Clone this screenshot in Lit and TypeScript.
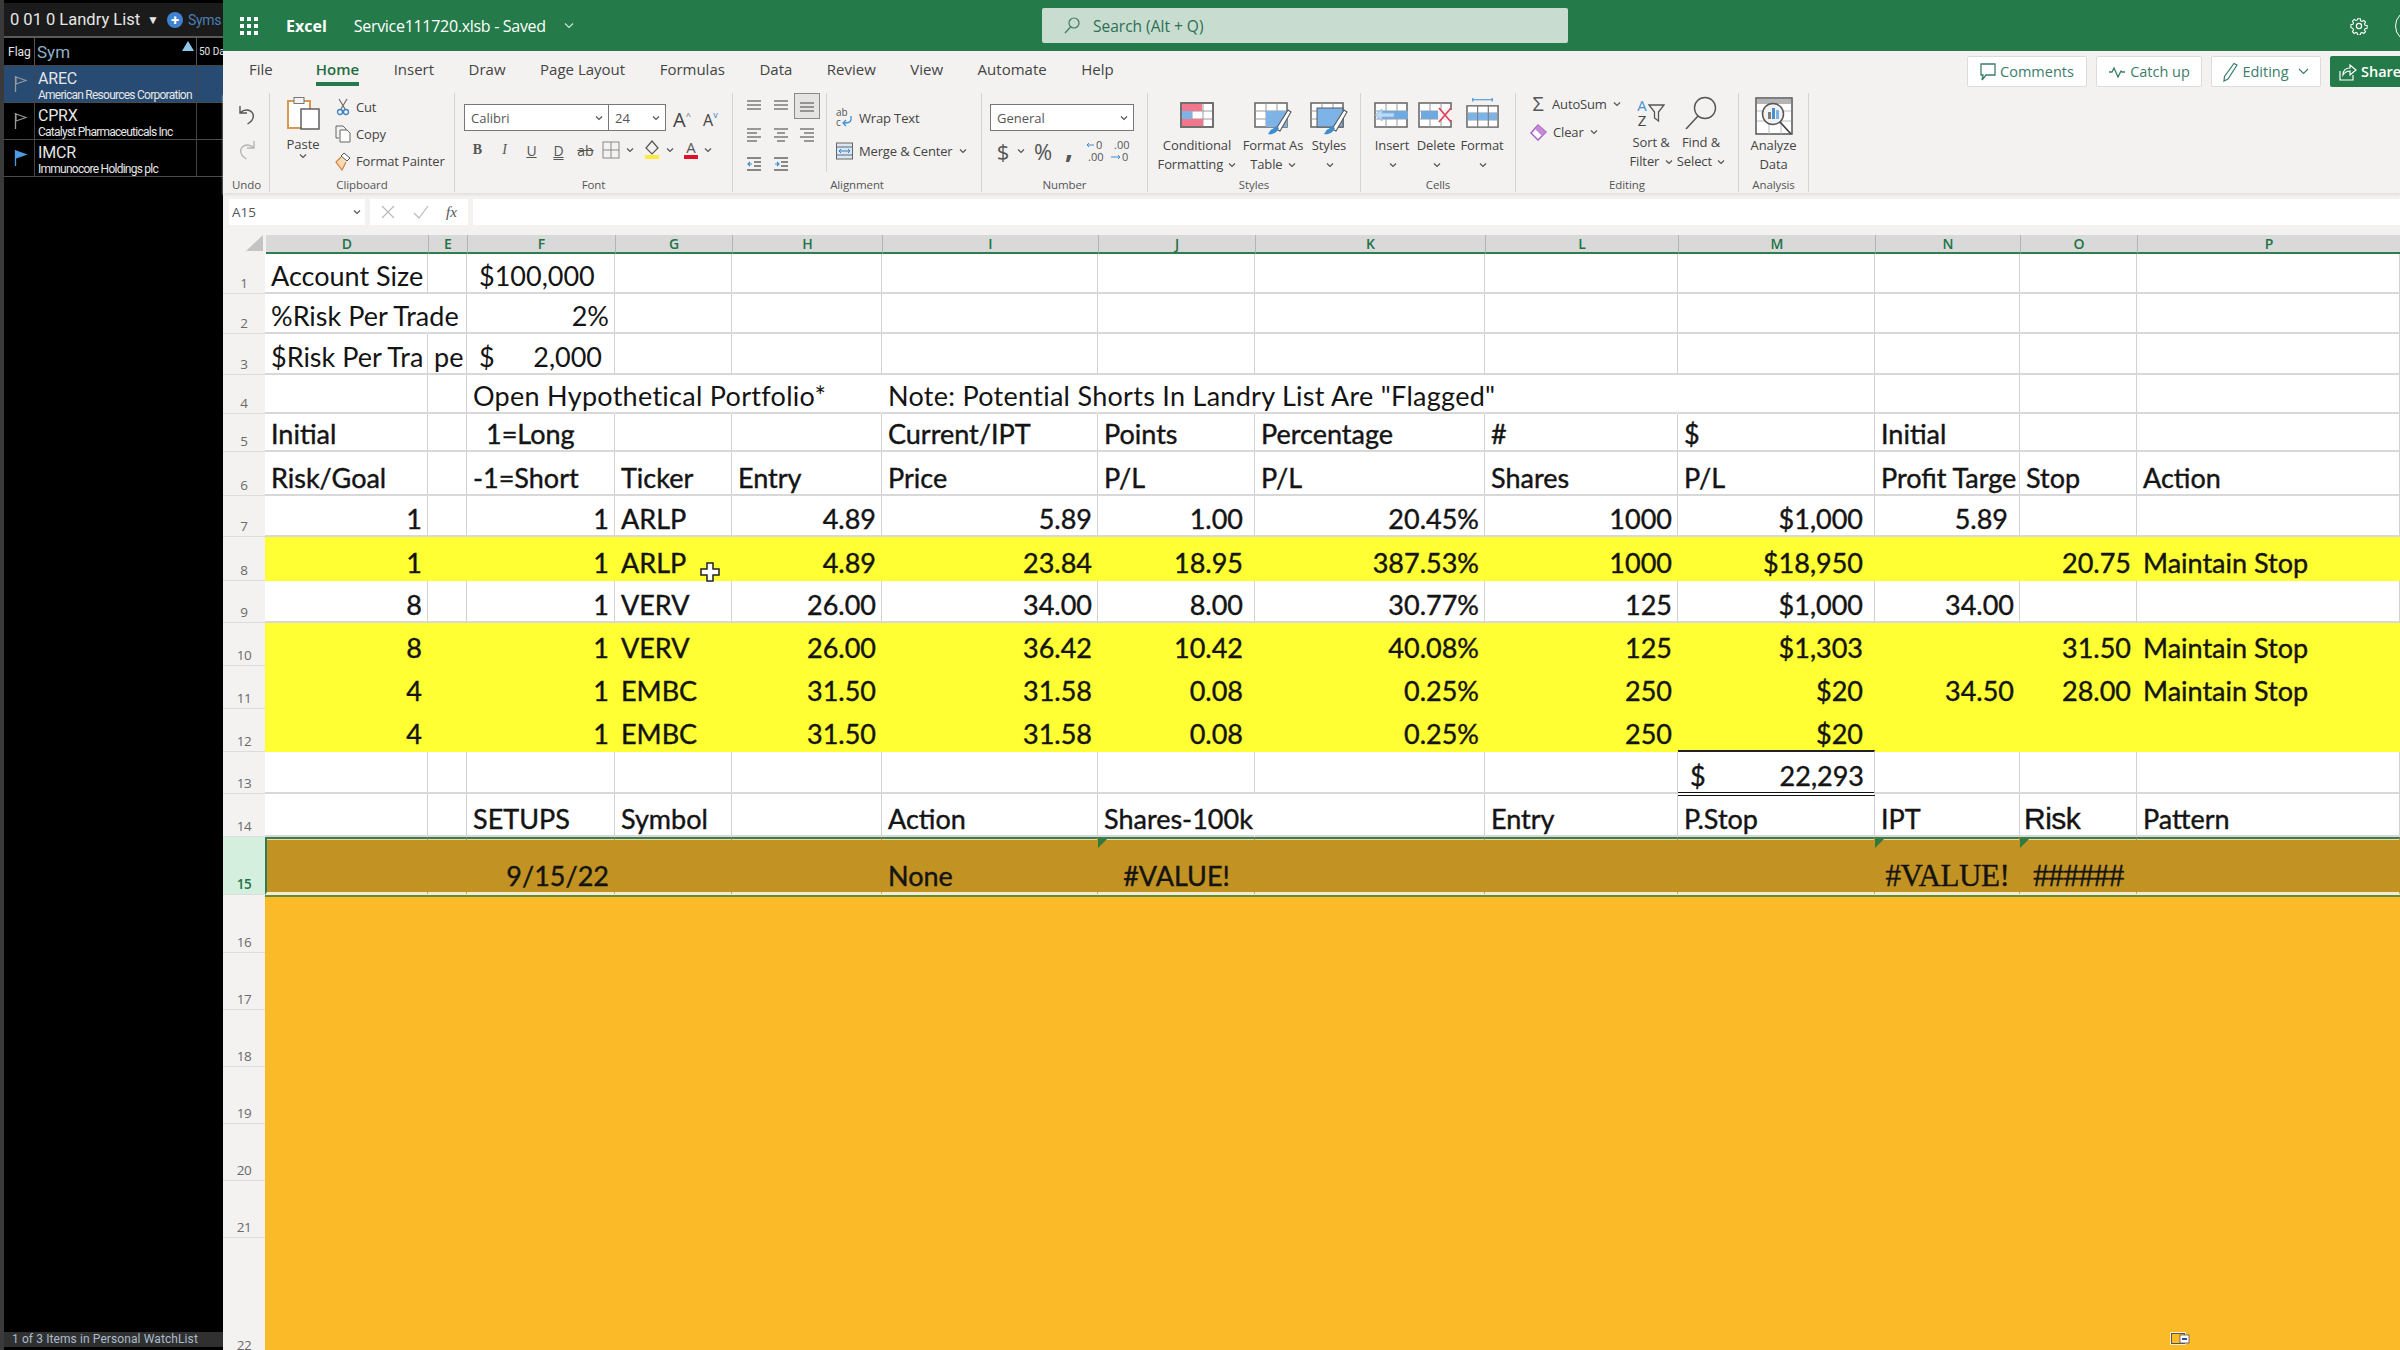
import { LitElement, html, svg, css } from 'lit';
import { customElement } from 'lit/decorators.js';

type Cell = string | { t: string; c?: string; t2?: string; mark?: boolean };
interface Row { n: number; h: number; tone?: string; strong?: boolean; open?: string; cells?: Record<string, Cell> }

const COLS = ['D', 'E', 'F', 'G', 'H', 'I', 'J', 'K', 'L', 'M', 'N', 'O', 'P'];
const r = (t: string): Cell => ({ t, c: 'r' });
// accounting formats leave a wider gap on the right
const rp = (t: string): Cell => ({ t, c: 'r pad' });

const trade = (n: number, tone: string, d: string, tick: string, entry: string, price: string, pts: string, pct: string, sh: string, pl: string, rest: Record<string, Cell> = {}): Row => ({
  n, h: 0, tone, strong: true,
  cells: { D: r(d), F: r('1'), G: tick, H: r(entry), I: r(price), J: rp(pts), K: r(pct), L: r(sh), M: rp(pl), ...rest },
});

const withH = (row: Row, h: number): Row => ({ ...row, h });

const ROWS: Row[] = [
  { n: 1, h: 40, cells: { D: 'Account Size', F: { t: '$100,000', c: 'ind' } } },
  { n: 2, h: 40, open: 'D', cells: { D: '%Risk Per Trade', F: r('2%') } },
  { n: 3, h: 41, cells: { D: '$Risk Per Tra', E: 'pe', F: { t: '$', t2: '2,000', c: 'acct' } } },
  { n: 4, h: 39, open: 'FGHIJKL', cells: { F: { t: 'Open Hypothetical Portfolio*', c: 'wide' }, I: { t: 'Note: Potential Shorts In Landry List Are "Flagged"', c: 'wide' } } },
  { n: 5, h: 38, strong: true, cells: { D: 'Initial', F: { t: '1=Long', c: 'ind2' }, I: 'Current/IPT', J: 'Points', K: 'Percentage', L: '#', M: '$', N: 'Initial' } },
  { n: 6, h: 44, strong: true, cells: { D: 'Risk/Goal', F: '-1=Short', G: 'Ticker', H: 'Entry', I: 'Price', J: 'P/L', K: 'P/L', L: 'Shares', M: 'P/L', N: { t: 'Profit Targe', c: 'clip' }, O: 'Stop', P: 'Action' } },
  withH(trade(7, '', '1', 'ARLP', '4.89', '5.89', '1.00', '20.45%', '1000', '$1,000', { N: rp('5.89') }), 41),
  withH(trade(8, 'yellow', '1', 'ARLP', '4.89', '23.84', '18.95', '387.53%', '1000', '$18,950', { O: r('20.75'), P: 'Maintain Stop' }), 44),
  withH(trade(9, '', '8', 'VERV', '26.00', '34.00', '8.00', '30.77%', '125', '$1,000', { N: r('34.00') }), 42),
  withH(trade(10, 'yellow', '8', 'VERV', '26.00', '36.42', '10.42', '40.08%', '125', '$1,303', { O: r('31.50'), P: 'Maintain Stop' }), 43),
  withH(trade(11, 'yellow', '4', 'EMBC', '31.50', '31.58', '0.08', '0.25%', '250', '$20', { N: r('34.50'), O: r('28.00'), P: 'Maintain Stop' }), 43),
  withH(trade(12, 'yellow', '4', 'EMBC', '31.50', '31.58', '0.08', '0.25%', '250', '$20'), 43),
  { n: 13, h: 42, strong: true, cells: { M: { t: '$', t2: '22,293', c: 'total' } } },
  { n: 14, h: 43, strong: true, open: 'J', cells: { F: 'SETUPS', G: 'Symbol', I: 'Action', J: 'Shares-100k', L: 'Entry', M: 'P.Stop', N: 'IPT', O: { t: 'Risk', c: 'arial' }, P: 'Pattern' } },
  { n: 15, h: 58, tone: 'sel', strong: true, cells: { F: r('9/15/22'), I: 'None', J: { t: '#VALUE!', c: 'mid', mark: true }, N: { t: '#VALUE!', c: 'err', mark: true }, O: { t: '######', c: 'err', mark: true } } },
  { n: 16, h: 58, tone: 'orange' },
  { n: 17, h: 57, tone: 'orange' },
  { n: 18, h: 57, tone: 'orange' },
  { n: 19, h: 57, tone: 'orange' },
  { n: 20, h: 57, tone: 'orange' },
  { n: 21, h: 57, tone: 'orange' },
  { n: 22, h: 118, tone: 'orange' },
];

const chev = html`<svg class="chev" width="8" height="6" viewBox="0 0 8 6"><path d="M1 1.5 4 4.5 7 1.5" fill="none" stroke="#555" stroke-width="1.2"/></svg>`;

const lines = (kind: string) => {
  const rows = kind === 'l' ? [[1, 15], [1, 11], [1, 15], [1, 11]] : kind === 'c' ? [[1, 15], [4, 12], [1, 15], [4, 12]] : kind === 'r' ? [[1, 15], [5, 15], [1, 15], [5, 15]] : [[1, 15], [1, 15], [1, 15]];
  const ys = kind === 'e' ? [3, 7, 11] : [2, 6, 10, 14];
  return html`<svg width="18" height="16" viewBox="0 0 16 16">${rows.map((p, i) => svg`<line x1=${p[0]} x2=${p[1]} y1=${ys[i]} y2=${ys[i]} stroke="#666" stroke-width="1.3"></line>`)}</svg>`;
};

const tableBase = svg`<rect x="1" y="1" width="32" height="24" fill="#fff" stroke="#6b6b6b" stroke-width="1.6"></rect>
  <path d="M12 1v24M23 1v24M1 9h32M1 17h32" stroke="#9a9a9a" stroke-width="1" fill="none"></path>`;

const brush = svg`<path d="M22 27 34 8 37 10 26 29Z" fill="#fff" stroke="#555" stroke-width="1.1"></path><path d="M14 32c4 1 9-1 11-6l-3-2c-2 3-5 3-6 5z" fill="#3f8fd0"></path>`;

const ICONS = {
  cond: html`<svg width="34" height="26" viewBox="0 0 34 26">${tableBase}<rect x="2" y="2" width="20" height="7" fill="#f2768c"></rect><rect x="2" y="9" width="10" height="8" fill="#7db3e6"></rect><rect x="2" y="17" width="21" height="7" fill="#f2768c"></rect><rect x="1" y="1" width="32" height="24" fill="none" stroke="#6b6b6b" stroke-width="1.6"></rect></svg>`,
  fat: html`<svg width="38" height="35" viewBox="0 0 38 33">${tableBase}<rect x="12" y="9" width="21" height="16" fill="#7db3e6"></rect>${brush}</svg>`,
  sty: html`<svg width="38" height="35" viewBox="0 0 38 33">${tableBase}<rect x="7" y="6" width="26" height="19" fill="#7db3e6" stroke="#5b5b5b"></rect>${brush}</svg>`,
  ins: html`<svg width="36" height="26" viewBox="0 0 36 26">${tableBase}<rect x="4" y="9" width="30" height="8" fill="#6fa9e0"></rect><path d="M1 13 8 7v4h12v4H8v4z" fill="#bcd9f3" stroke="#8ab8e2" stroke-width=".8"></path></svg>`,
  del: html`<svg width="36" height="26" viewBox="0 0 36 26">${tableBase}<rect x="3" y="9" width="20" height="8" fill="#6fa9e0"></rect><rect x="20" y="8" width="16" height="10" fill="#f3f2f1"></rect><path d="M21 6 33 20M33 6 21 20" stroke="#e0455f" stroke-width="1.8"></path></svg>`,
  fmt: html`<svg width="33" height="31" viewBox="0 0 34 35" preserveAspectRatio="none"><path d="M7 3h20M7 1v4M27 1v4" stroke="#3d8dd0" stroke-width="1.2" fill="none"></path><g transform="translate(0 9)">${tableBase}<rect x="2" y="9" width="30" height="8" fill="#7db3e6"></rect><path d="M12 1v24M23 1v24" stroke="#777" stroke-width="1"></path></g></svg>`,
  find: html`<svg width="34" height="34" viewBox="0 0 34 34"><circle cx="21" cy="12" r="10.5" fill="none" stroke="#555" stroke-width="1.4"></circle><line x1="14" y1="20" x2="2" y2="33" stroke="#555" stroke-width="1.5"></line></svg>`,
  analyze: html`<svg width="38" height="38" viewBox="0 0 38 38"><rect x="1" y="1" width="36" height="36" fill="#fff" stroke="#555" stroke-width="1.5"></rect><rect x="2" y="2" width="34" height="5" fill="#b5b5b5"></rect><path d="M2 14h34M2 24h34M14 24v13M26 24v13" stroke="#bbb"></path><circle cx="18" cy="17" r="10.5" fill="#f3f2f1" stroke="#555" stroke-width="1.5"></circle><rect x="13" y="15" width="3" height="7" fill="#7d7d7d"></rect><rect x="17" y="11" width="3" height="11" fill="#4a90d0"></rect><rect x="21" y="13" width="3" height="9" fill="#7db3e6"></rect><line x1="25" y1="25" x2="36" y2="37" stroke="#444" stroke-width="1.8"></line></svg>`,
};

@customElement('app-root')
export class AppRoot extends LitElement {
  static styles = css`
    :host { display: block; width: 2400px; height: 1350px; overflow: hidden; background: #f3f2f1; font-family: 'Open Sans', sans-serif; color: #444; }
    .page { display: flex; height: 1350px; }

    /* watchlist panel */
    .side { width: 223px; flex: none; box-sizing: border-box; border-left: 4px solid #3a3a3a; background: #000; display: flex; flex-direction: column; font-family: 'Roboto', sans-serif; color: #e6e6e6; }
    .side-top { margin-top: 3px; height: 33px; background: #1b1b1b; border-bottom: 2px solid #5a5a5a; display: flex; align-items: center; padding-left: 6px; font-size: 16.5px; white-space: nowrap; overflow: hidden; }
    .side-top .caret { font-size: 12px; margin: 0 8px 0 7px; }
    .plus { width: 16px; height: 16px; border-radius: 50%; background: #3f82d0; color: #fff; font-size: 15px; font-weight: 700; line-height: 16px; text-align: center; flex: none; margin-right: 5px; }
    .syms { color: #4c7fb5; font-size: 14px; letter-spacing: -0.3px; }
    .side-head { height: 27px; flex: none; display: grid; grid-template-columns: 31px 162px 1fr; border-bottom: 1px solid #444; }
    .side-head > div { border-right: 1px solid #555; display: flex; align-items: center; overflow: hidden; white-space: nowrap; }
    .side-head .fl { font-size: 12px; padding-left: 4px; }
    .side-head .sy { font-size: 17px; color: #8fb0c8; padding-left: 2px; justify-content: space-between; align-items: center; }
    .sort { width: 0; height: 0; border: 6px solid transparent; border-top: 0; border-bottom: 10px solid #8fc7e8; margin: -12px 2px 0 0; }
    .side-head .da { font-size: 10px; padding-left: 2px; border: 0; }
    .item { height: 36px; flex: none; display: grid; grid-template-columns: 31px 162px 1fr; border-bottom: 1px solid #4a4a4a; font-size: 16px; }
    .item.on { background: #274b72; }
    .item > div { border-right: 1px solid #444; }
    .item > div:last-child { border: 0; }
    .flag { display: flex; align-items: center; padding-left: 10px; }
    .who { padding: 4px 0 0 3px; line-height: 18px; letter-spacing: -0.2px; white-space: nowrap; overflow: hidden; }
    .who small { display: block; font-size: 12px; line-height: 14px; letter-spacing: -0.75px; }
    .side-fill { flex: 1; }
    .side-foot { height: 15px; flex: none; margin-bottom: 3px; background: #303030; color: #a9bccb; font-size: 12px; line-height: 15px; padding-left: 8px; letter-spacing: 0.1px; white-space: nowrap; }

    /* excel */
    .main { flex: 1; display: flex; flex-direction: column; min-width: 0; }
    .title { height: 51px; flex: none; background: #247b49; color: #fff; display: grid; grid-template-columns: 819px 526px 1fr; align-items: center; font-size: 16px; overflow: hidden; white-space: nowrap; }
    .brand { display: flex; align-items: center; }
    .waffle { margin-left: 17px; display: grid; grid-template-columns: repeat(3, 4px); gap: 3px; }
    .waffle i { width: 4px; height: 4px; background: #fff; }
    .app { margin-left: 28px; font-weight: 700; font-size: 16px; }
    .doc { margin-left: 27px; letter-spacing: -0.3px; }
    .doc-chev { margin-left: 18px; }
    .search { height: 35px; box-sizing: border-box; background: #c8ddd0; border-radius: 2px; color: #2e6f55; display: flex; align-items: center; padding-left: 22px; gap: 13px; font-size: 15.5px; }
    .title-r { display: flex; align-items: center; }
    .gear { margin-left: 782px; flex: none; }
    .avatar { width: 30px; height: 30px; margin-left: 27px; border: 1.5px solid #fff; border-radius: 50%; flex: none; }

    .tabs { height: 42px; flex: none; display: flex; align-items: flex-start; padding-left: 26px; font-size: 15px; white-space: nowrap; }
    .tab { margin-right: 34.5px; height: 35px; line-height: 36px; box-sizing: border-box; }
    .tab.first { margin-right: 43px; }
    .tab.on { color: #1f6d42; font-weight: 600; border-bottom: 4px solid #247b49; }
    .actions { margin-left: auto; display: flex; gap: 9px; padding-top: 5px; }
    .btn { height: 31px; box-sizing: border-box; background: #fff; border: 1px solid #dcdcdc; border-radius: 2px; color: #3a7d6a; display: flex; align-items: center; justify-content: center; gap: 4px; font-size: 14.5px; }
    .btn.c { width: 120px; } .btn.u { width: 106px; } .btn.e { width: 110px; }
    .btn.s { width: 72px; background: #247b49; color: #fff; border: 0; border-radius: 2px 0 0 2px; font-weight: 600; justify-content: flex-start; padding-left: 9px; overflow: hidden; margin-right: -2px; }

    .ribbon { height: 100px; flex: none; display: flex; padding-left: 1px; box-shadow: 0 2px 2px #e2e0de; font-size: 13px; }
    .group { height: 99px; box-sizing: border-box; border-right: 1px solid #d6d4d2; display: flex; flex-direction: column; flex: none; }
    .gbody { flex: 1; display: flex; min-height: 0; }
    .glabel { height: 18px; line-height: 22px; text-align: center; font-size: 11.5px; color: #555; letter-spacing: -0.1px; }
    .g-undo { width: 46px; } .g-clip { width: 185px; } .g-font { width: 278px; } .g-align { width: 249px; }
    .g-num { width: 166px; } .g-styles { width: 213px; } .g-cells { width: 155px; } .g-edit { width: 223px; } .g-ana { width: 70px; }
    .undo { flex-direction: column; align-items: center; padding-top: 11px; gap: 13px; width: 100%; }
    .paste { width: 38px; margin-left: 14px; display: flex; flex-direction: column; align-items: center; padding-top: 3px; }
    .paste span { line-height: 18px; margin-top: 5px; }
    .clip-r { margin-left: 12px; display: flex; flex-direction: column; }
    .mini { height: 27px; display: flex; align-items: center; gap: 5px; white-space: nowrap; letter-spacing: -0.15px; }
    .mini svg { flex: none; }
    .mini .ic { width: 17px; display: flex; justify-content: center; }

    .font-col { padding: 11px 0 0 9px; display: flex; flex-direction: column; width: 100%; }
    .row1 { display: flex; align-items: center; height: 27px; }
    .dd { box-sizing: border-box; height: 27px; background: #fff; border: 1px solid #777; display: flex; align-items: center; justify-content: space-between; padding: 0 5px 0 6px; font-size: 13px; color: #555; }
    .dd.name { width: 144px; border-right: 0; } .dd.size { width: 58px; }
    .dd.num { width: 144px; }
    .grow { font-size: 20px; margin-left: 7px; width: 28px; line-height: 27px; }
    .grow sup { font-size: 9px; color: #666; vertical-align: 8px; }
    .grow.s { font-size: 16px; margin-left: 2px; }
    .row2 { display: flex; align-items: center; height: 30px; margin-top: 4px; }
    .fb { width: 27px; text-align: center; flex: none; font-size: 14px; color: #555; }
    .fb.b { font-weight: 700; font-family: 'Liberation Serif', serif; }
    .fb.i { font-style: italic; font-family: 'Liberation Serif', serif; }
    .fb.u { text-decoration: underline; }
    .fb.d { text-decoration: underline; text-decoration-style: double; }
    .fb.st { text-decoration: line-through; }
    .ib { width: 24px; display: flex; justify-content: center; flex: none; }
    .cb { width: 14px; display: flex; justify-content: center; flex: none; }

    .al-grid { width: 94px; box-sizing: border-box; padding-left: 7px; border-right: 1px solid #d6d4d2; display: grid; grid-template-columns: 27px 27px 26px; grid-template-rows: 26px 32px 26px; align-items: center; justify-items: center; margin-bottom: 2px; }
    .boxed { width: 26px; height: 26px; box-sizing: border-box; border: 1px solid #8a8a8a; background: #e6e4e2; display: flex; align-items: flex-end; justify-content: center; padding-bottom: 2px; }
    .al-r { padding: 11px 0 0 9px; display: flex; flex-direction: column; gap: 6px; }
    .al-r .mini { gap: 6px; }
    .num-sym { width: 20px; text-align: center; font-size: 22px; color: #555; flex: none; }
    .num-gap { flex: none; width: 26px; text-align: center; font-size: 28px; color: #555; }

    .tall-wrap { display: flex; align-items: flex-start; padding-top: 7px; }
    .tall { flex: none; display: flex; flex-direction: column; align-items: center; line-height: 19px; text-align: center; white-space: nowrap; letter-spacing: -0.1px; }
    .tall .pic { height: 36px; display: flex; align-items: flex-end; justify-content: center; box-sizing: border-box; }
    .tall .pic.up { padding-bottom: 8px; }
    .tall .chev { margin-left: 2px; vertical-align: 1px; }
    .edit-l { width: 112px; padding-left: 14px; box-sizing: border-box; flex: none; display: flex; flex-direction: column; gap: 6px; }
    .edit-l .mini { gap: 6px; height: 22px; }
    .sigma { font-size: 20px; color: #555; width: 16px; text-align: center; line-height: 20px; }
    .sort-ic { display: flex; align-items: center; height: 30px; }
    .az { display: flex; flex-direction: column; font-size: 15px; line-height: 15px; margin-right: 1px; }
    .az b { font-weight: 400; color: #4a8fd0; }

    .fx { height: 28px; flex: none; margin-top: 6px; display: flex; gap: 5px; padding-left: 6px; }
    .fx > div { background: #fff; height: 26px; box-sizing: border-box; display: flex; align-items: center; font-size: 13.5px; color: #555; }
    .namebox { width: 136px; justify-content: space-between; padding: 0 4px 0 3px; }
    .fxbtn { width: 98px; padding-left: 10px; gap: 17px; }
    .fxbtn i { font-family: 'Liberation Serif', serif; font-size: 15px; }
    .fxin { flex: 1; }

    /* sheet */
    .sheet { flex: 1; position: relative; margin-top: 8px; min-height: 0; overflow: hidden; }
    .grid { display: grid; grid-template-columns: 42px 163px 39px 148px 117px 150px 216px 157px 230px 193px 197px 145px 117px 263px; }
    .colhead { height: 19px; align-items: stretch; margin-left: 1px; }
    .corner { display: flex; justify-content: flex-end; padding-right: 2px; }
    .ch { background: #d9d9d9; border-right: 1px solid #b4b4b4; border-bottom: 2px solid #2f7d4f; color: #217346; font-weight: 600; font-size: 14px; line-height: 17px; text-align: center; }
    .row { background: #fff; }
    .row.yellow { background: #ffff33; }
    .row.sel { background: #c29322; }
    .row.orange { background: #fbbb28; }
    .rh { background: #f3f2f1; border-bottom: 1px solid #dcdcdc; color: #6a6a6a; font-size: 13.5px; letter-spacing: -0.4px; display: flex; align-items: flex-end; justify-content: center; padding-bottom: 1px; box-sizing: border-box; }
    .cell { box-sizing: border-box; min-width: 0; border-right: 1px solid #d2d2d2; border-bottom: 2px solid #d8d8d8; font-family: 'Lato', sans-serif; font-size: 27px; line-height: 31px; color: #141414; padding: 0 5px 1px 6px; display: flex; align-items: flex-end; white-space: nowrap; position: relative; }
    .cell.open { border-right-color: transparent; }
    .strong .cell { -webkit-text-stroke: 0.4px #141414; }
    .r { justify-content: flex-end; }
    .cell.pad { padding-right: 11px; }
    .ind { padding-left: 12px; }
    .ind2 { padding-left: 19px; }
    .wide { letter-spacing: 0.28px; }
    .clip { overflow: hidden; padding-right: 0; }
    .acct { justify-content: space-between; padding-left: 12px; padding-right: 12px; }
    .total { justify-content: space-between; padding-left: 12px; padding-right: 10px; border-top: 2px solid #222; border-bottom: 4px double #111; margin: -2px 0 -2px; z-index: 1; }
    .arial { font-family: 'Liberation Sans', sans-serif; font-size: 30px; letter-spacing: -0.5px; padding-left: 4px; }
    .mid { justify-content: center; }
    .err { font-family: 'Liberation Serif', serif; font-size: 31px; justify-content: center; letter-spacing: -0.4px; }
    .yellow .cell, .orange .cell { border-color: transparent; }
    .sel .cell { border-color: transparent; border-top: 2px solid #3d7d4c; border-bottom: 3px solid #f4edd4; box-shadow: inset 0 1px 0 #e8dcae, 0 2px 0 #5f8d3a; z-index: 1; }
    .sel .rh + .cell { border-left: 2px solid #2f7d4f; }
    .sel .rh { background: #d5efdf; color: #217346; font-weight: 600; }
    .tri { position: absolute; left: 0; top: 0; width: 0; height: 0; border-top: 9px solid #2f7a3f; border-right: 9px solid transparent; }
    .cursor { position: absolute; left: 477px; top: 327px; z-index: 3; }
    .tray { position: absolute; left: 1947px; top: 1097px; z-index: 3; }
  `;

  private renderCell(col: string, row: Row) {
    const raw = row.cells?.[col];
    const cell = typeof raw === 'string' ? { t: raw } : raw;
    const open = row.open?.includes(col) ? 'open' : '';
    return html`<div class="cell ${open} ${cell?.c ?? ''}">${cell?.mark ? html`<span class="tri"></span>` : ''}${cell?.t2 ? html`<span>${cell.t}</span><span>${cell.t2}</span>` : cell?.t ?? ''}</div>`;
  }

  private renderSide() {
    const flag = (fill: boolean) => html`<svg width="14" height="20" viewBox="0 0 14 20"><path d="M1.500 2v16" stroke=${fill ? '#4d9be0' : '#9a9a9a'} stroke-width="1.3"></path><path d="M2 3l10 3.500L2 10z" fill=${fill ? '#4d9be0' : 'none'} stroke=${fill ? '#4d9be0' : '#9a9a9a'} stroke-width="1.1"></path></svg>`;
    const items = [
      ['AREC', 'American Resources Corporation', false, true],
      ['CPRX', 'Catalyst Pharmaceuticals Inc', false, false],
      ['IMCR', 'Immunocore Holdings plc', true, false],
    ] as const;
    return html`<aside class="side">
      <div class="side-top">0 01 0 Landry List<span class="caret">▼</span><span class="plus">+</span><span class="syms">Syms</span></div>
      <div class="side-head"><div class="fl">Flag</div><div class="sy">Sym<span class="sort"></span></div><div class="da">50 Da</div></div>
      ${items.map(i => html`<div class="item ${i[3] ? 'on' : ''}"><div class="flag">${flag(i[2])}</div><div class="who">${i[0]}<small>${i[1]}</small></div><div></div></div>`)}
      <div class="side-fill"></div>
      <div class="side-foot">1 of 3 Items in Personal WatchList</div>
    </aside>`;
  }

  private renderTitle() {
    return html`<div class="title">
      <div class="brand">
        <div class="waffle">${Array.from({ length: 9 }, () => html`<i></i>`)}</div>
        <span class="app">Excel</span>
        <span class="doc">Service111720.xlsb - Saved</span>
        <svg class="doc-chev" width="10" height="7" viewBox="0 0 10 7"><path d="M1 1.5 5 5.5 9 1.5" fill="none" stroke="#cfe3d7" stroke-width="1.2"/></svg>
      </div>
      <div class="search"><svg width="16" height="17" viewBox="0 0 16 17"><circle cx="10" cy="6" r="5" fill="none" stroke="#3d7a60" stroke-width="1.2"/><line x1="6.5" y1="10" x2="1" y2="16" stroke="#3d7a60" stroke-width="1.2"/></svg>Search (Alt + Q)</div>
      <div class="title-r">
        <svg class="gear" width="18" height="18" viewBox="0 0 18 18"><circle cx="9" cy="9" r="2.6" fill="none" stroke="#fff" stroke-width="1.2"/><path d="M7.5 1h3l.4 2.2 1.500.7 1.900-1.200 2 2-1.200 1.900.7 1.500 2.200.4v3l-2.200.4-.7 1.500 1.200 1.900-2 2-1.900-1.200-1.500.7-.4 2.200h-3l-.4-2.200-1.500-.7-1.900 1.200-2-2 1.200-1.900-.7-1.500L0 10.500v-3l2.200-.4.7-1.500L1.700 3.700l2-2 1.900 1.200 1.500-.7z" transform="translate(.9 .9) scale(.9)" fill="none" stroke="#fff" stroke-width="1.2"/></svg>
        <div class="avatar"></div>
      </div>
    </div>`;
  }

  private renderTabs() {
    const tabs = ['File', 'Home', 'Insert', 'Draw', 'Page Layout', 'Formulas', 'Data', 'Review', 'View', 'Automate', 'Help'];
    return html`<div class="tabs">
      ${tabs.map((t, i) => html`<div class="tab ${i === 0 ? 'first' : ''} ${i === 1 ? 'on' : ''}">${t}</div>`)}
      <div class="actions">
        <div class="btn c"><svg width="16" height="20" viewBox="0 0 16 20"><path d="M1 2h14v11H6l-4 5 1-5H1z" fill="none" stroke="#3a7d6a" stroke-width="1.3"/></svg>Comments</div>
        <div class="btn u"><svg width="18" height="12" viewBox="0 0 18 12"><path d="M1 6h3l2-4 4 9 3-6 1 1h3" fill="none" stroke="#3a7d6a" stroke-width="1.3"/></svg>Catch up</div>
        <div class="btn e"><svg width="15" height="20" viewBox="0 0 15 20"><path d="M11 1.500 14 3 5 17l-4 2 .5-4.500z" fill="none" stroke="#3a7d6a" stroke-width="1.2"/></svg>Editing<svg width="11" height="7" viewBox="0 0 11 7" style="margin-left:5px"><path d="M1 1l4.500 4.500L10 1" fill="none" stroke="#3a7d6a" stroke-width="1.2"/></svg></div>
        <div class="btn s"><svg width="18" height="18" viewBox="0 0 18 18" style="flex:none"><path d="M1 8v9h13v-5M4 12c0-5 3-7 7-7V2l6 5-6 5V8c-3 0-5 1-7 4z" fill="none" stroke="#fff" stroke-width="1.2"/></svg>Share</div>
      </div>
    </div>`;
  }

  private renderRibbon() {
    const A = (col: string) => html`<svg width="20" height="18" viewBox="0 0 20 18"><text x="10" y="12" text-anchor="middle" font-family="Open Sans" font-size="15" fill="#555">A</text><rect x="3" y="14" width="14" height="4" fill=${col}></rect></svg>`;
    const bucket = html`<svg width="20" height="20" viewBox="0 0 20 20"><path d="M10 1 16 8l-6 6-6-6z" fill="none" stroke="#555" stroke-width="1.2"/><rect x="3" y="15" width="14" height="4" fill="#ffe93b"/></svg>`;
    return html`<div class="ribbon">
      <div class="group g-undo"><div class="gbody undo">
        <svg width="18" height="22" viewBox="0 0 18 22"><path d="M2 2v7h7M2.500 8.500C6 5 12 5 14.500 9c2 4 0 8-5 11" fill="none" stroke="#555" stroke-width="1.4"/></svg>
        <svg width="18" height="22" viewBox="0 0 18 22"><path d="M16 2v7H9M15.500 8.500C12 5 6 5 3.500 9c-2 4 0 8 5 11" fill="none" stroke="#b5b5b5" stroke-width="1.4"/></svg>
      </div><div class="glabel">Undo</div></div>

      <div class="group g-clip"><div class="gbody">
        <div class="paste">
          <svg width="33" height="34" viewBox="0 0 33 34"><rect x="1" y="5" width="22" height="27" fill="#fff" stroke="#d59a4e" stroke-width="2"/><rect x="7" y="1.500" width="10" height="6" fill="#f3f2f1" stroke="#777"/><rect x="14" y="13" width="18" height="20" fill="#fff" stroke="#555" stroke-width="1.4"/></svg>
          <span>Paste</span>${chev}
        </div>
        <div class="clip-r">
          <div class="mini"><span class="ic"><svg width="14" height="18" viewBox="0 0 14 18"><path d="M3 1l6 10M11 1 5 11" stroke="#666" stroke-width="1.1" fill="none"/><circle cx="4" cy="14" r="2.500" fill="none" stroke="#3d7fc0" stroke-width="1.300"/><circle cx="10" cy="14" r="2.500" fill="none" stroke="#3d7fc0" stroke-width="1.300"/></svg></span>Cut</div>
          <div class="mini"><span class="ic"><svg width="16" height="18" viewBox="0 0 16 18"><path d="M1 1h7l3 3v1M1 1v12h3" fill="none" stroke="#666"/><path d="M5 5h7l3 3v9H5z" fill="#fff" stroke="#666"/></svg></span>Copy</div>
          <div class="mini"><span class="ic"><svg width="18" height="20" viewBox="0 0 18 20"><path d="M10 2l6 5-3 3-6-5z" fill="#fff" stroke="#555"/><path d="M7 6 2 11l6 8 4-8" fill="#f6d9b5" stroke="#d5813a" stroke-width="1.200"/></svg></span>Format Painter</div>
        </div>
      </div><div class="glabel">Clipboard</div></div>

      <div class="group g-font"><div class="gbody"><div class="font-col">
        <div class="row1">
          <div class="dd name">Calibri ${chev}</div><div class="dd size">24 ${chev}</div>
          <div class="grow">A<sup>^</sup></div><div class="grow s">A<sup style="color:#3d7fc0">v</sup></div>
        </div>
        <div class="row2">
          <span class="fb b">B</span><span class="fb i">I</span><span class="fb u">U</span><span class="fb d">D</span><span class="fb st">ab</span>
          <span class="ib"><svg width="18" height="18" viewBox="0 0 18 18"><rect x="1" y="1" width="16" height="16" fill="none" stroke="#888"/><path d="M9 1v16M1 9h16" stroke="#888"/></svg></span><span class="cb">${chev}</span>
          <span class="ib" style="margin-left:3px">${bucket}</span><span class="cb" style="width:12px">${chev}</span>
          <span class="ib" style="margin-left:3px">${A('#e0102a')}</span><span class="cb" style="width:10px">${chev}</span>
        </div>
      </div></div><div class="glabel">Font</div></div>

      <div class="group g-align"><div class="gbody">
        <div class="al-grid">
          ${lines('e')}${lines('e')}<div class="boxed">${lines('e')}</div>
          ${lines('l')}${lines('c')}${lines('r')}
          <svg width="18" height="16" viewBox="0 0 16 16"><path d="M1 2h14M8 6h7M8 10h7M1 14h14" stroke="#666" stroke-width="1.300"/><path d="M6 8 2 8M4 6 2 8l2 2" fill="none" stroke="#3d8dd0" stroke-width="1.200"/></svg>
          <svg width="18" height="16" viewBox="0 0 16 16"><path d="M1 2h14M8 6h7M8 10h7M1 14h14" stroke="#666" stroke-width="1.300"/><path d="M2 8h4M4 6l2 2-2 2" fill="none" stroke="#3d8dd0" stroke-width="1.200"/></svg>
        </div>
        <div class="al-r">
          <div class="mini"><svg width="17" height="22" viewBox="0 0 17 22"><text x="0" y="9" font-family="Open Sans" font-size="10" fill="#555">ab</text><text x="0" y="19" font-family="Open Sans" font-size="10" fill="#555">c</text><path d="M15 9c1 7-3 7-7 7" fill="none" stroke="#3d8dd0" stroke-width="1.300"/><path d="M10 13l-3 3 3 3" fill="none" stroke="#3d8dd0" stroke-width="1.300"/></svg>Wrap Text</div>
          <div class="mini"><svg width="17" height="18" viewBox="0 0 17 18"><rect x=".5" y="1" width="16" height="16" fill="#d9e8f6" stroke="#666"/><path d="M1 5h15M1 13h15" stroke="#666"/><path d="M3 9h11M5 7 3 9l2 2M12 7l2 2-2 2" fill="none" stroke="#2f7fc4"/></svg>Merge &amp; Center ${chev}</div>
        </div>
      </div><div class="glabel">Alignment</div></div>

      <div class="group g-num"><div class="gbody"><div class="font-col" style="padding-left:8px">
        <div class="row1"><div class="dd num">General ${chev}</div></div>
        <div class="row2" style="margin-top:5px">
          <span class="num-sym" style="margin-left:3px">$</span><span class="cb" style="width:16px">${chev}</span>
          <span class="num-sym" style="margin-left:1px;width:26px">%</span>
          <span class="num-gap" style="font-weight:700;line-height:14px;height:22px">,</span>
          <svg width="22" height="24" viewBox="0 0 22 24" style="margin-left:3px"><text x="11" y="10" font-family="Open Sans" font-size="11" fill="#555">0</text><text x="3" y="22" font-family="Open Sans" font-size="11" fill="#555">.00</text><path d="M9 6H2M4 4 2 6l2 2" fill="none" stroke="#3d8dd0"/></svg>
          <svg width="22" height="24" viewBox="0 0 22 24" style="margin-left:2px"><text x="5" y="10" font-family="Open Sans" font-size="11" fill="#555">.00</text><text x="13" y="22" font-family="Open Sans" font-size="11" fill="#555">0</text><path d="M2 18h9M9 16l2 2-2 2" fill="none" stroke="#3d8dd0"/></svg>
        </div>
      </div></div><div class="glabel">Number</div></div>

      <div class="group g-styles"><div class="gbody tall-wrap" style="padding-left:10px">
        <div class="tall" style="width:78px"><div class="pic up">${ICONS.cond}</div>Conditional<span>Formatting ${chev}</span></div>
        <div class="tall" style="width:64px;margin-left:5px"><div class="pic">${ICONS.fat}</div>Format As<span>Table ${chev}</span></div>
        <div class="tall" style="width:40px;margin-left:4px"><div class="pic">${ICONS.sty}</div>Styles<span>${chev}</span></div>
      </div><div class="glabel">Styles</div></div>

      <div class="group g-cells"><div class="gbody tall-wrap" style="padding-left:9px">
        <div class="tall" style="width:44px"><div class="pic up">${ICONS.ins}</div>Insert<span>${chev}</span></div>
        <div class="tall" style="width:44px"><div class="pic up">${ICONS.del}</div>Delete<span>${chev}</span></div>
        <div class="tall" style="width:48px"><div class="pic up">${ICONS.fmt}</div>Format<span>${chev}</span></div>
      </div><div class="glabel">Cells</div></div>

      <div class="group g-edit"><div class="gbody tall-wrap" style="padding-top:0">
        <div class="edit-l">
          <div class="mini"><span class="sigma">Σ</span>AutoSum ${chev}</div>
          <div class="mini"><svg width="17" height="17" viewBox="0 0 17 17"><path d="M8 1l8 7-8 8-7-7z" fill="#fff" stroke="#a658c4" stroke-width="1.400"/><path d="M5 5l3-4 8 7-4 4z" fill="#c48ad8"/></svg>Clear ${chev}</div>
        </div>
        <div class="tall" style="width:46px;margin-top:5px"><div class="sort-ic"><div class="az"><b>A</b>Z</div><svg width="17" height="20" viewBox="0 0 17 20"><path d="M1 2h15l-5.500 7v9l-4-3V9z" fill="none" stroke="#555" stroke-width="1.300"/></svg></div><span style="margin-top:5px">Sort &amp;</span><span>Filter ${chev}</span></div>
        <div class="tall" style="width:50px;margin:3px 0 0 2px"><div style="height:34px">${ICONS.find}</div><span style="margin-top:3px">Find &amp;</span><span>Select ${chev}</span></div>
      </div><div class="glabel">Editing</div></div>

      <div class="group g-ana"><div class="gbody tall-wrap" style="padding-top:4px;justify-content:center">
        <div class="tall"><div style="height:39px">${ICONS.analyze}</div>Analyze<span>Data</span></div>
      </div><div class="glabel">Analysis</div></div>
    </div>`;
  }

  render() {
    return html`<div class="page">
      ${this.renderSide()}
      <div class="main">
        ${this.renderTitle()}
        ${this.renderTabs()}
        ${this.renderRibbon()}
        <div class="fx">
          <div class="namebox">A15 ${chev}</div>
          <div class="fxbtn">
            <svg width="16" height="16" viewBox="0 0 16 16"><path d="M2 2l12 12M14 2 2 14" stroke="#bbb" stroke-width="1.200"/></svg>
            <svg width="16" height="16" viewBox="0 0 16 16"><path d="M1 9l5 5 9-12" fill="none" stroke="#bbb" stroke-width="1.200"/></svg>
            <i>fx</i>
          </div>
          <div class="fxin"></div>
        </div>
        <div class="sheet">
          <div class="grid colhead">
            <div class="corner"><svg width="18" height="16" viewBox="0 0 18 16"><path d="M17 0v16H0z" fill="#c4c4c4"/></svg></div>
            ${COLS.map(c => html`<div class="ch">${c}</div>`)}
          </div>
          ${ROWS.map(row => html`<div class="grid row ${row.tone ?? ''} ${row.strong ? 'strong' : ''}" style="height:${row.h}px">
            <div class="rh">${row.n}</div>
            ${COLS.map(c => this.renderCell(c, row))}
          </div>`)}
          <svg class="cursor" width="20" height="20" viewBox="0 0 20 20"><path d="M7 1h6v6h6v6h-6v6H7v-6H1V7h6z" fill="#fff" stroke="#222" stroke-width="1.500"/></svg>
          <svg class="tray" width="20" height="13" viewBox="0 0 20 13"><rect x="1" y="1" width="14" height="11" fill="#fbbb28" stroke="#fff" stroke-width="1.500"/><rect x="1.500" y="1.500" width="13" height="10" fill="none" stroke="#555"/><rect x="10" y="3" width="9" height="8" fill="#fff" stroke="#555" stroke-width=".8"/><rect x="12" y="6" width="5" height="2" fill="#334a9a"/></svg>
        </div>
      </div>
    </div>`;
  }
}
